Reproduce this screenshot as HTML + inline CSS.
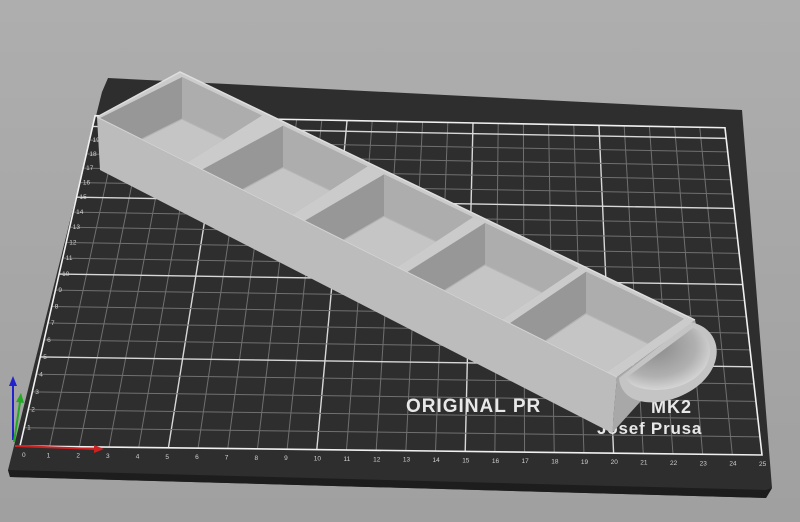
<!DOCTYPE html>
<html><head><meta charset="utf-8"><style>
html,body{margin:0;padding:0;width:800px;height:522px;overflow:hidden;background:#a5a5a5}
svg{display:block}
</style></head><body>
<svg id="s" width="800" height="522" viewBox="0 0 800 522" xmlns="http://www.w3.org/2000/svg" font-family="Liberation Sans, sans-serif">
<defs>
<linearGradient id="bg" x1="0" y1="0" x2="0" y2="1"><stop offset="0" stop-color="#aeaeae"/><stop offset="1" stop-color="#a0a0a0"/></linearGradient>
<radialGradient id="bowl" cx="0.35" cy="0.3" r="0.8"><stop offset="0" stop-color="#8a8a8a"/><stop offset="0.6" stop-color="#b0b0b0"/><stop offset="1" stop-color="#e6e6e6"/></radialGradient>
</defs>
<rect width="800" height="522" fill="url(#bg)"/>
<polygon points="108,78 742,110 772,488 766,498 10,477 8,470 100,100 102,92" fill="#2e2e2e"/>
<polygon points="8,470 766,490 772,488 766,498 10,477" fill="#1d1d1d"/>
<g id="grid"></g>
<text x="406" y="412" font-size="19" font-weight="bold" fill="#e8e8e8" letter-spacing="1">ORIGINAL PR</text>
<text x="651" y="413" font-size="18" font-weight="bold" fill="#e8e8e8" letter-spacing="1">MK2</text>
<text x="597" y="434" font-size="17" font-weight="bold" fill="#e8e8e8" letter-spacing="0.8">Josef Prusa</text>
<g id="obj"></g>
<g stroke-width="2" fill="none">
<line x1="13" y1="440" x2="13" y2="384" stroke="#2222cc"/>
<polygon points="9,386 13,376 17,386" fill="#2222cc" stroke="none"/>
<line x1="14" y1="442" x2="20" y2="402" stroke="#22aa22"/>
<polygon points="16,402 21,393 24,403" fill="#22aa22" stroke="none"/>
<line x1="15" y1="446" x2="96" y2="449" stroke="#cc2222"/>
<polygon points="94,445 104,449 94,453" fill="#cc2222" stroke="none"/>
</g>
</svg>
<script>
var NS="http://www.w3.org/2000/svg";
function el(p,t,a,txt){var e=document.createElementNS(NS,t);for(var k in a)e.setAttribute(k,a[k]);if(txt!=null)e.textContent=txt;p.appendChild(e);return e;}
var g=document.getElementById('grid');
var TL=[95,116],TR=[725,128],BL=[20,446],BR=[762,455];
function yv(v){return 446-18.42*v+0.1222*v*v;}
function P(u,v){var t=(446-yv(v))/330;var l=[BL[0]+(TL[0]-BL[0])*t,BL[1]+(TL[1]-BL[1])*t];var r=[BR[0]+(TR[0]-BR[0])*t,BR[1]+(TR[1]-BR[1])*t];var f=u/25;return [l[0]+(r[0]-l[0])*f,l[1]+(r[1]-l[1])*f];}
var VT=20.8;
for(var u=1;u<25;u++){var a=P(u,0),b=P(u,VT);var maj=u%5==0;el(g,'line',{x1:a[0],y1:a[1],x2:b[0],y2:b[1],stroke:maj?'#d8d8d8':'#707070','stroke-width':maj?1.4:1});}
for(var v=1;v<=20;v++){var a=P(0,v),b=P(25,v);var maj=v%5==0;el(g,'line',{x1:a[0],y1:a[1],x2:b[0],y2:b[1],stroke:maj?'#d8d8d8':'#707070','stroke-width':maj?1.4:1});}
var c=[P(0,0),P(25,0),P(25,VT),P(0,VT)];
el(g,'polygon',{points:c.map(function(p){return p.join(',')}).join(' '),fill:'none',stroke:'#f0f0f0','stroke-width':1.6});
for(var u=0;u<=25;u++){var a=P(u,0);el(g,'text',{x:a[0]+(u==0?2:-3),y:a[1]+11,'font-size':6.5,fill:'#d0d0d0'},u);}
for(var v=1;v<=19;v++){var a=P(0,v);el(g,'text',{x:a[0]+3,y:a[1]+2,'font-size':6.5,fill:'#d0d0d0'},v);}
var o=document.getElementById('obj');
function pts(a){return a.map(function(p){return p[0]+','+p[1]}).join(' ');}
el(o,'polygon',{points:pts([[617,377],[695,320],[700,340],[640,402],[612,433]]),fill:'#a8a8a8'});
el(o,'path',{d:'M690,322 C712,326 722,345 714,365 C704,390 670,405 645,402 C628,400 620,390 619,378 Z',fill:'#c4c4c4'});
el(o,'path',{d:'M693,328 C710,334 714,350 706,366 C694,386 664,394 640,388 C632,386 628,382 626,378 Z',fill:'url(#bowl)'});
el(o,'polygon',{points:pts([[97,117],[617,377],[612,433],[100,170]]),fill:'#bcbcbc'});
el(o,'polygon',{points:pts([[97,117],[180,72],[695,320],[617,377]]),fill:'#cbcbcb'});
el(o,'polyline',{points:pts([[97,117],[180,72],[695,320]]),fill:'none',stroke:'#dedede','stroke-width':1.5});
el(o,'line',{x1:97,y1:117,x2:617,y2:377,stroke:'#d4d4d4','stroke-width':1});
var D=42;
for(var i=0;i<5;i++){
 var fx=100+i*102.5,fw=88+i*2.3,bx=182+i*101,bw=80+i*4.5;
 var fl=[fx,118+0.5*(fx-100)],fr=[fx+fw,118+0.5*(fx+fw-100)];
 var bl=[bx,77+0.4816*(bx-182)],br=[bx+bw,77+0.4816*(bx+bw-182)];
 var op=[fl,bl,br,fr];
 var id='c'+i;
 var cp=el(o,'clipPath',{id:id});el(cp,'polygon',{points:pts(op)});
 var gg=el(o,'g',{'clip-path':'url(#'+id+')'});
 el(gg,'polygon',{points:pts(op),fill:'#979797'});
 el(gg,'polygon',{points:pts([bl,br,[br[0],br[1]+D],[bl[0],bl[1]+D]]),fill:'#adadad'});
 var sh=op.map(function(p){return [p[0],p[1]+D]});
 el(gg,'polygon',{points:pts(sh),fill:'#c5c5c5'});
 el(gg,'polyline',{points:pts([sh[0],sh[1],sh[2]]),fill:'none',stroke:'#b4b4b4','stroke-width':1.2});
}
</script>
</body></html>
